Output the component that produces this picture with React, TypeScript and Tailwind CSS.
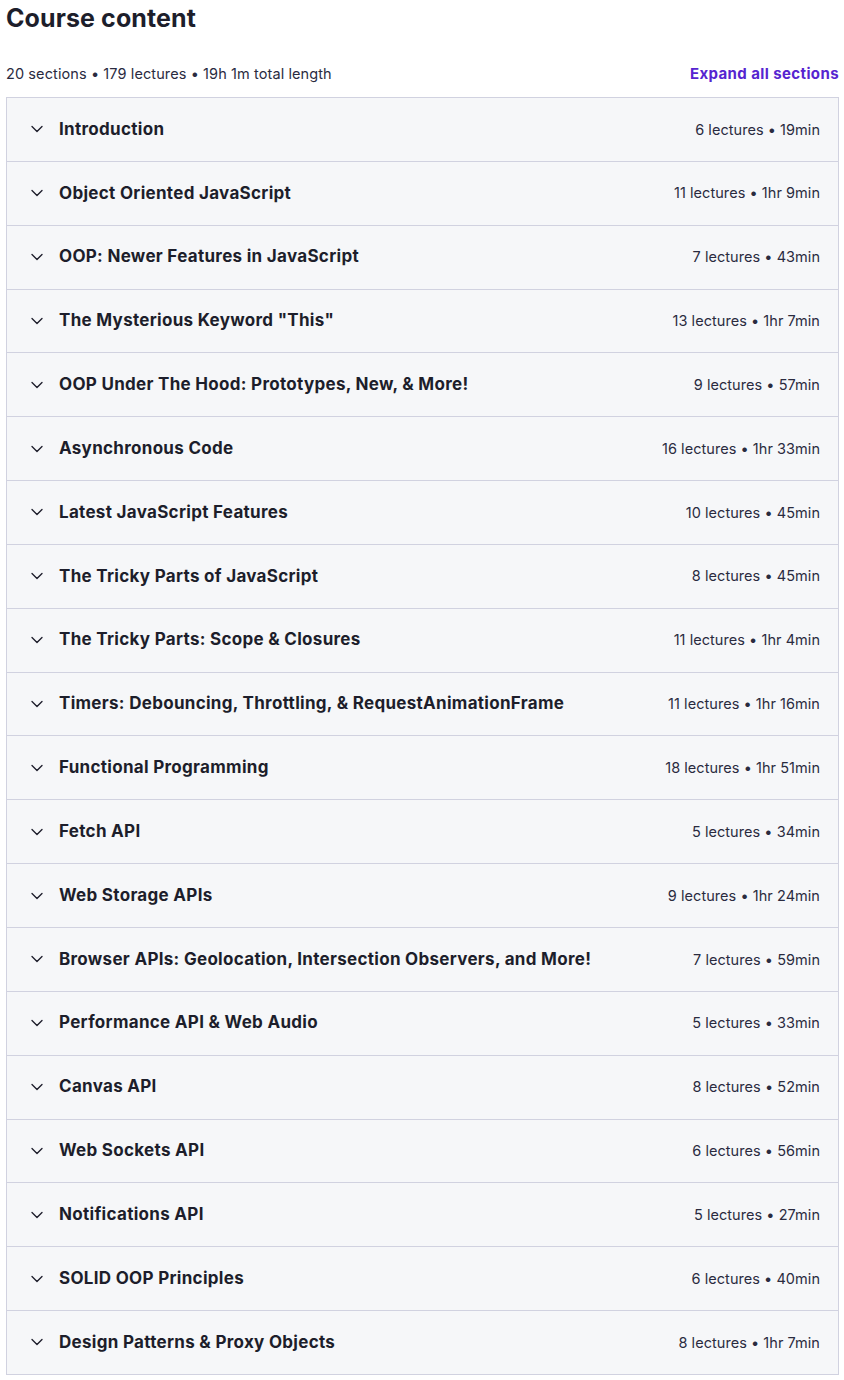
import { ChevronDown } from "lucide-react";

type Section = {
    title: string;
    lectures: number;
    length: string;
};

const sections: Section[] = [
    { title: 'Introduction', lectures: 6, length: '19min' },
    { title: 'Object Oriented JavaScript', lectures: 11, length: '1hr 9min' },
    { title: 'OOP: Newer Features in JavaScript', lectures: 7, length: '43min' },
    { title: 'The Mysterious Keyword "This"', lectures: 13, length: '1hr 7min' },
    { title: 'OOP Under The Hood: Prototypes, New, & More!', lectures: 9, length: '57min' },
    { title: 'Asynchronous Code', lectures: 16, length: '1hr 33min' },
    { title: 'Latest JavaScript Features', lectures: 10, length: '45min' },
    { title: 'The Tricky Parts of JavaScript', lectures: 8, length: '45min' },
    { title: 'The Tricky Parts: Scope & Closures', lectures: 11, length: '1hr 4min' },
    { title: 'Timers: Debouncing, Throttling, & RequestAnimationFrame', lectures: 11, length: '1hr 16min' },
    { title: 'Functional Programming', lectures: 18, length: '1hr 51min' },
    { title: 'Fetch API', lectures: 5, length: '34min' },
    { title: 'Web Storage APIs', lectures: 9, length: '1hr 24min' },
    { title: 'Browser APIs: Geolocation, Intersection Observers, and More!', lectures: 7, length: '59min' },
    { title: 'Performance API & Web Audio', lectures: 5, length: '33min' },
    { title: 'Canvas API', lectures: 8, length: '52min' },
    { title: 'Web Sockets API', lectures: 6, length: '56min' },
    { title: 'Notifications API', lectures: 5, length: '27min' },
    { title: 'SOLID OOP Principles', lectures: 6, length: '40min' },
    { title: 'Design Patterns & Proxy Objects', lectures: 8, length: '1hr 7min' },
];

// each row carries its own top border, so the list only needs sides + bottom
function SectionRow({ data }: { data: Section }) {
    return (
        <div className="h-[63.85px] flex items-center justify-between bg-[#f6f7f9] pl-[20px] pr-[18px] border-t border-[#d1d2e0]">
            <div className="flex items-center gap-[12px]">
                <ChevronDown size={20} strokeWidth={1.6} className="text-[#1d1e2b]" />
                <span className="text-[17px] font-bold text-[#1d1e2b] tracking-[0.3px]">{data.title}</span>
            </div>
            <span className="text-[14.5px] text-[#2a2b3f] tracking-[0.05px]">{data.lectures} lectures • {data.length}</span>
        </div>
    );
}

export default function App() {
    return (
        <div className="min-h-[1380px] bg-white pl-[6px] pr-[5px] font-['Inter',sans-serif] text-[#1d1e2b]">
            <h2 className="text-[25px] font-bold leading-[36px] tracking-[0.1px] text-[#1d1e2b]">Course content</h2>
            <div className="flex items-center justify-between mt-[28px] mb-[13px] h-[20px]">
                <span className="text-[14.5px] text-[#2a2b3f] tracking-[0.1px]">20 sections • 179 lectures • 19h 1m total length</span>
                <button className="text-[15px] font-bold text-[#5624d0] tracking-[0.4px]">Expand all sections</button>
            </div>
            <div className="border-x border-b border-[#d1d2e0]">
                {sections.map(item => (
                    <SectionRow key={item.title} data={item} />
                ))}
            </div>
        </div>
    );
}
